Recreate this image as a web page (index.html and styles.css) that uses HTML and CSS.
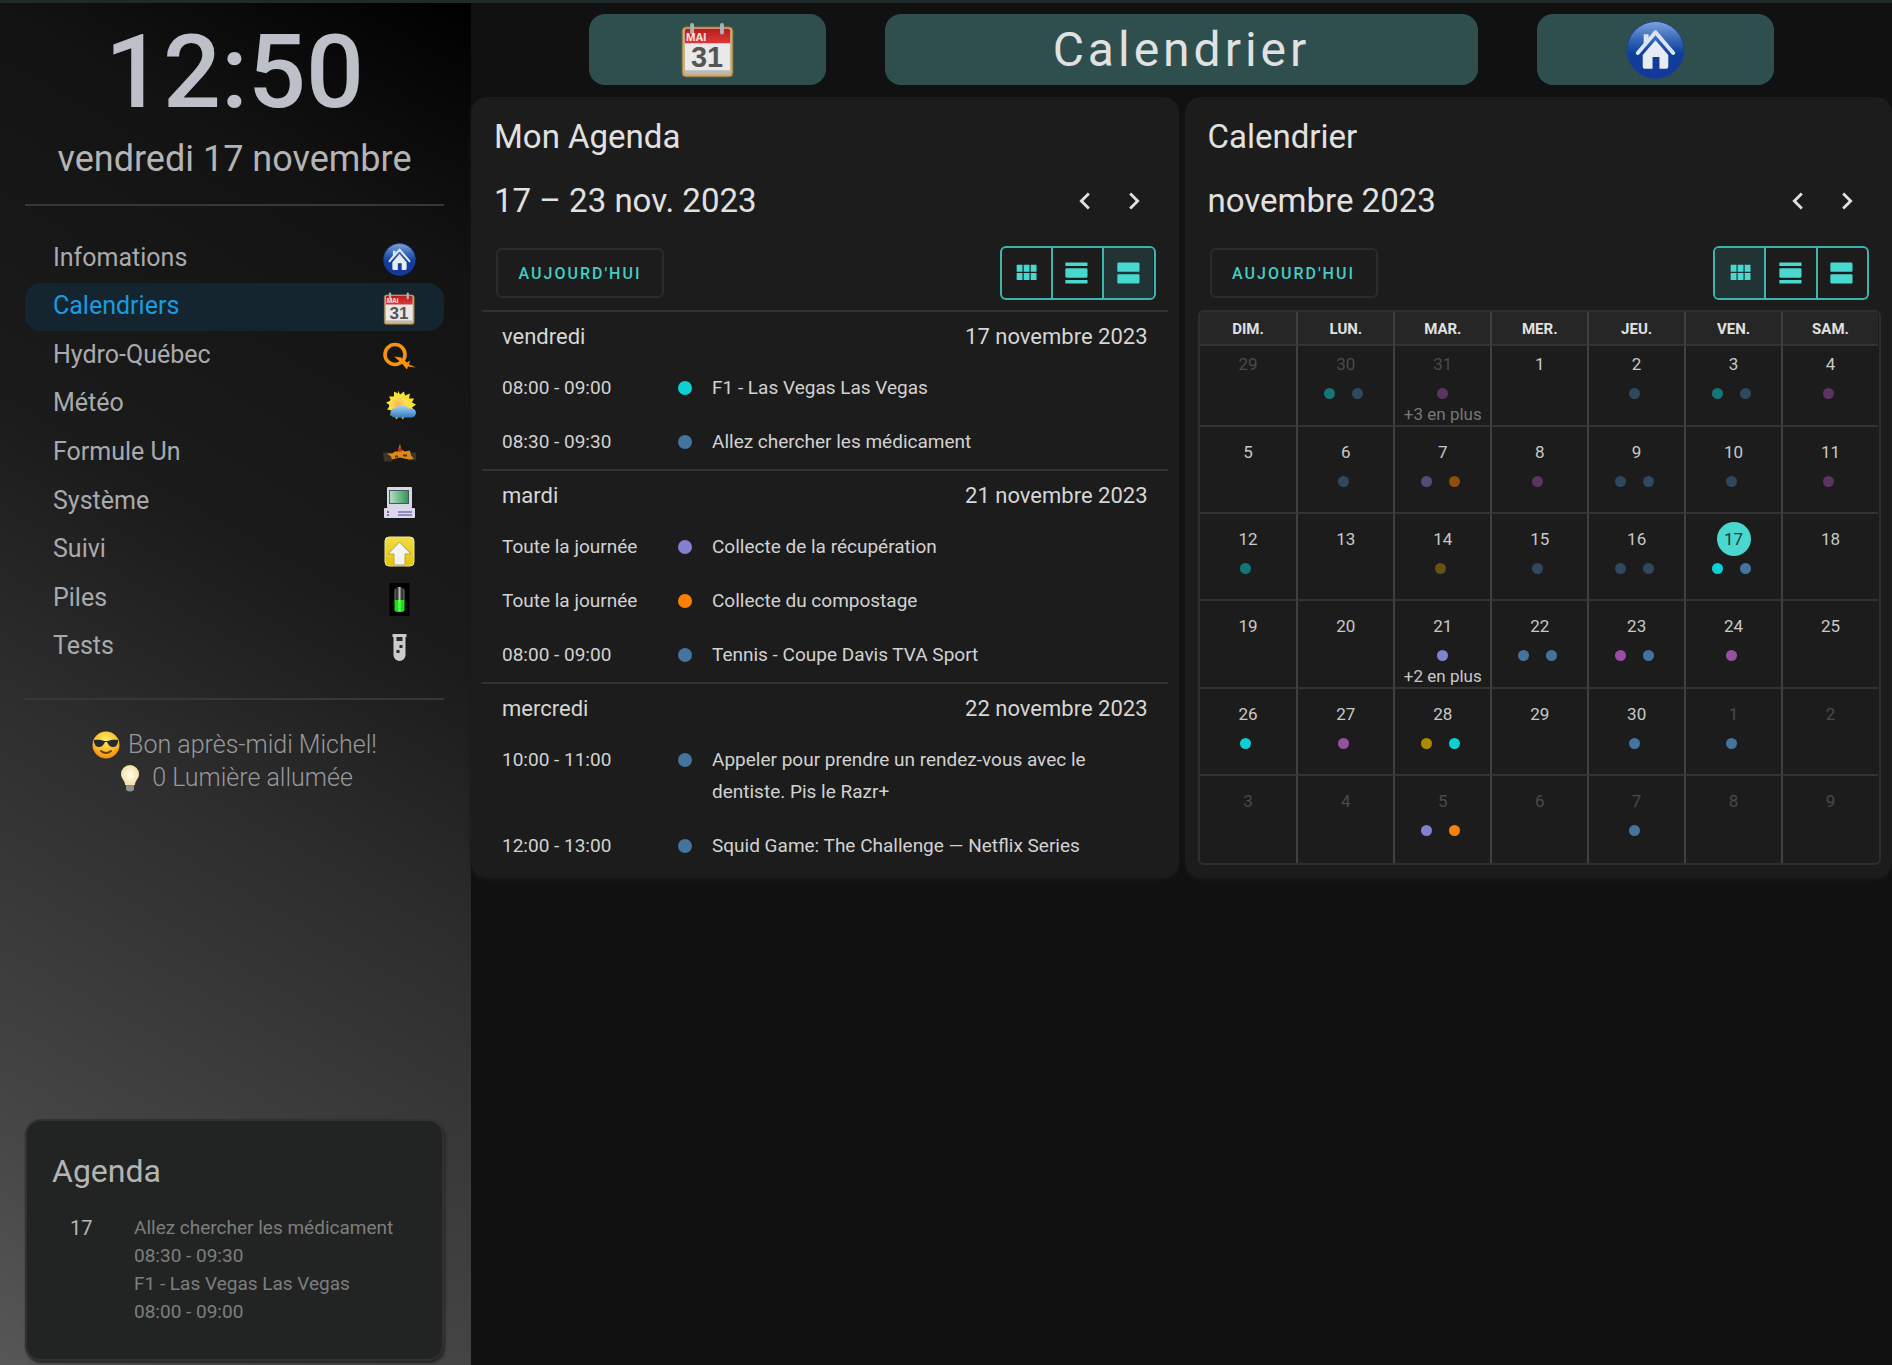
FILE: index.html
```html
<!DOCTYPE html>
<html lang="fr">
<head>
<meta charset="utf-8">
<title>Calendrier</title>
<meta name="viewport" content="width=device-width, initial-scale=1">
<link rel="stylesheet" href="styles.css">
</head>
<body>
<svg class="defs" aria-hidden="true">
  <defs>
    <linearGradient id="blue" x1="0" y1="0" x2="0" y2="1"><stop offset="0" stop-color="#7fa3dc"/><stop offset=".35" stop-color="#2f62b4"/><stop offset=".55" stop-color="#0f3f9b"/><stop offset="1" stop-color="#15379a"/></linearGradient>
    <linearGradient id="red" x1="0" y1="0" x2="0" y2="1"><stop offset="0" stop-color="#b81c1c"/><stop offset="1" stop-color="#dc3a3a"/></linearGradient>
    <radialGradient id="sun"><stop offset="0" stop-color="#f9b25a"/><stop offset="1" stop-color="#fbe84a"/></radialGradient>
    <linearGradient id="cloud" x1="0" y1="0" x2="0" y2="1"><stop offset="0" stop-color="#a9d0f0"/><stop offset="1" stop-color="#2f7fc4"/></linearGradient>
    <linearGradient id="screen" x1="0" y1="0" x2="1" y2="0"><stop offset="0" stop-color="#b5dcc0"/><stop offset="1" stop-color="#2f9a50"/></linearGradient>
    <linearGradient id="yellow" x1="0" y1="0" x2="0" y2="1"><stop offset="0" stop-color="#efdc4a"/><stop offset="1" stop-color="#e2c40c"/></linearGradient>
    <linearGradient id="metal" x1="0" y1="0" x2="1" y2="0"><stop offset="0" stop-color="#777"/><stop offset=".25" stop-color="#222"/><stop offset=".5" stop-color="#bbb"/><stop offset=".75" stop-color="#222"/><stop offset="1" stop-color="#777"/></linearGradient>
    <radialGradient id="face" cx=".5" cy=".3" r=".7"><stop offset="0" stop-color="#ffec6a"/><stop offset=".6" stop-color="#fbbd2a"/><stop offset="1" stop-color="#ef8a12"/></radialGradient>
    <radialGradient id="bulb" cx=".5" cy=".5" r=".55"><stop offset="0" stop-color="#fffdf0"/><stop offset="1" stop-color="#f3dc9c"/></radialGradient>

    <symbol id="i-home" viewBox="0 0 60 60">
      <circle cx="30" cy="30" r="29" fill="url(#blue)" stroke="#1b3f94" stroke-width="1"/>
      <path d="M18 25v-11h5v6" fill="#dbe4f2"/>
      <path d="M12 33 30 12 48 33" fill="none" stroke="#dbe4f2" stroke-width="4" stroke-linecap="round" stroke-linejoin="round"/>
      <path d="M30 20 43 35v12q0 2-2 2h-7v-12h-7v12h-8q-2 0-2-2v-12z" fill="#e6ebf4"/>
    </symbol>
    <symbol id="i-calendar" viewBox="0 0 56 58">
      <rect x="1" y="5" width="53" height="52" rx="4" fill="#c9ab6c" stroke="#6d5b36" stroke-width="1"/>
      <rect x="4" y="7" width="47" height="46" rx="2" fill="#e9e9ea"/>
      <path d="M4 22V9q0-2 2-2h43q2 0 2 2v13z" fill="url(#red)"/>
      <path d="M4 50h47v3H4z" fill="#b9b9b9"/>
      <path d="M11.500 3v8M42.500 3v8" stroke="#a9b4b6" stroke-width="4" stroke-linecap="round"/>
      <text x="5" y="20" class="cal-month">MAI</text>
      <text x="27" y="47" class="cal-day" text-anchor="middle">31</text>
    </symbol>
    <symbol id="i-hydro" viewBox="0 0 33 28">
      <circle cx="12" cy="12" r="10" fill="none" stroke="#f7940d" stroke-width="3.600"/>
      <path d="M11 14l7 1 6 5 3-2-1 4 7 3-8-1-1 3-6-7z" fill="#f7940d"/>
    </symbol>
    <symbol id="i-weather" viewBox="0 0 33 30">
      <path d="M15 0l2 4 4-3 1 4 5-2-1 5 5 0-2 4 4 2-4 3 3 4-5 0 0 5-5-2-2 5-3-4-4 4-1-5-5 1 2-5-5-1 3-4-4-3 5-2-2-4 5 0 0-5 4 2z" fill="#f6e232"/>
      <circle cx="15" cy="14" r="9" fill="url(#sun)"/>
      <path d="M11 27a5 5 0 0 1-3-7q2-3 5-2 2-4 7-3 4 0 5 3 7-1 8 4 0 4-4 5z" fill="url(#cloud)"/>
    </symbol>
    <symbol id="i-f1" viewBox="0 0 33 20">
      <path d="M0 9h9v9H1zM24 9h9v8h-8z" fill="#39342c"/>
      <path d="M9 10 12 8h3l1-4 1-4 1 6 4 2 5-1 1 5 3 3-4 1-6-1-4-1-8 2-1-3-4-3z" fill="#e08a14"/>
      <path d="M15 4h3l1 4h-4z" fill="#b8301a"/>
      <path d="M12 12h3v2h-3zM20 11h4v2h-4z" fill="#503718"/>
    </symbol>
    <symbol id="i-computer" viewBox="0 0 33 33">
      <rect x="4" y="1" width="25" height="21" rx="1" fill="#dad6ea"/>
      <rect x="6" y="4" width="20" height="14" fill="#4c5468"/>
      <rect x="7" y="5" width="18" height="12" fill="url(#screen)"/>
      <rect x="1" y="22" width="31" height="10" rx="1" fill="#dcd8ec"/>
      <path d="M15 25h14v2H15zM15 28h14v2H15z" fill="#8f8ab8"/>
      <path d="M4 25h2v2H4z" fill="#d04a5a"/><path d="M4 28h2v2H4z" fill="#4a8ad0"/>
    </symbol>
    <symbol id="i-up" viewBox="0 0 33 33">
      <rect x="2" y="2" width="29" height="29" rx="4" fill="url(#yellow)" stroke="#f3e68a" stroke-width="1"/>
      <path d="M16.500 7 28 19h-6v11H11V19H5z" fill="#f4f4f4" stroke="#b8a644" stroke-width="1"/>
    </symbol>
    <symbol id="i-battery" viewBox="0 0 20 33">
      <path d="M0 0h20v33H0z" fill="#000"/>
      <path d="M5 7q0-2 3-2v-1h4v1q3 0 3 2v11H5z" fill="url(#metal)"/>
      <path d="M5 17h10v10q0 2-5 2t-5-2z" fill="#13e213"/>
      <path d="M9 17h2v11H9z" fill="#8dff8d"/>
    </symbol>
    <symbol id="i-tube" viewBox="0 0 16 30">
      <path d="M1 1h14v3h-1v18a6 6 0 0 1-12 0V4H1z" fill="#cbcbcb"/>
      <path d="M5 4h6v4H5zM8 12h3v3H8zM5 17h3v3H5z" fill="#2a2a2a"/>
    </symbol>
    <symbol id="i-cool" viewBox="0 0 28 28">
      <circle cx="14" cy="14" r="13.500" fill="url(#face)"/>
      <path d="M2 9q6-1 10 1h4q4-2 10-1v2q-1 5-5 5t-6-5h-2q-2 5-6 5t-5-5z" fill="#252a2e"/>
      <path d="M9 20q5 4 10 0" fill="none" stroke="#6b3d10" stroke-width="2" stroke-linecap="round"/>
    </symbol>
    <symbol id="i-bulb" viewBox="0 0 28 28">
      <path d="M14 1a9 9 0 0 1 9 9c0 5-4 6-4 11H9C9 16 5 15 5 10a9 9 0 0 1 9-9z" fill="url(#bulb)"/>
      <path d="M10 21h8v5q-4 3-8 0z" fill="#8f918f"/>
    </symbol>
    <symbol id="i-prev" viewBox="0 0 24 24"><path d="M15.410 16.580 10.830 12l4.580-4.590L14 6l-6 6 6 6z"/></symbol>
    <symbol id="i-next" viewBox="0 0 24 24"><path d="M8.590 16.580 13.170 12 8.590 7.410 10 6l6 6-6 6z"/></symbol>
    <symbol id="i-month" viewBox="0 0 24 24"><path d="M16 5v6h5V5M10 11h5V5h-5M16 18h5v-6h-5M10 18h5v-6h-5M4 18h5v-6H4M4 11h5V5H4z"/></symbol>
    <symbol id="i-day" viewBox="0 0 24 24"><path d="M2 3v3h19V3M20 8H3a1 1 0 0 0-1 1v6a1 1 0 0 0 1 1h17a1 1 0 0 0 1-1V9a1 1 0 0 0-1-1M2 21h19v-3H2z"/></symbol>
    <symbol id="i-list" viewBox="0 0 24 24"><path d="M20 3H3a1 1 0 0 0-1 1v6a1 1 0 0 0 1 1h17a1 1 0 0 0 1-1V4a1 1 0 0 0-1-1M20 13H3a1 1 0 0 0-1 1v6a1 1 0 0 0 1 1h17a1 1 0 0 0 1-1v-6a1 1 0 0 0-1-1z"/></symbol>
  </defs>
</svg>

<aside class="sidebar">
  <time class="clock">12:50</time>
  <p class="today-date">vendredi 17 novembre</p>
  <hr class="rule">
  <nav class="menu">
    <a class="menu-item" href="#infos"><span class="menu-label">Infomations</span><svg class="menu-icon"><use href="#i-home"/></svg></a>
    <a class="menu-item active" href="#calendriers"><span class="menu-label">Calendriers</span><svg class="menu-icon"><use href="#i-calendar"/></svg></a>
    <a class="menu-item" href="#hydro"><span class="menu-label">Hydro-Québec</span><svg class="menu-icon"><use href="#i-hydro"/></svg></a>
    <a class="menu-item" href="#meteo"><span class="menu-label">Météo</span><svg class="menu-icon"><use href="#i-weather"/></svg></a>
    <a class="menu-item" href="#f1"><span class="menu-label">Formule Un</span><svg class="menu-icon"><use href="#i-f1"/></svg></a>
    <a class="menu-item" href="#systeme"><span class="menu-label">Système</span><svg class="menu-icon"><use href="#i-computer"/></svg></a>
    <a class="menu-item" href="#suivi"><span class="menu-label">Suivi</span><svg class="menu-icon"><use href="#i-up"/></svg></a>
    <a class="menu-item" href="#piles"><span class="menu-label">Piles</span><svg class="menu-icon"><use href="#i-battery"/></svg></a>
    <a class="menu-item" href="#tests"><span class="menu-label">Tests</span><svg class="menu-icon tube"><use href="#i-tube"/></svg></a>
  </nav>
  <hr class="rule">
  <div class="messages">
    <p class="message"><svg class="emoji"><use href="#i-cool"/></svg>Bon après-midi Michel!</p>
    <p class="message"><svg class="emoji"><use href="#i-bulb"/></svg>0 Lumière allumée</p>
  </div>
  <section class="mini-agenda">
    <h2 class="mini-title">Agenda</h2>
    <div class="mini-body">
      <span class="mini-day">17</span>
      <div class="mini-events">
        <p>Allez chercher les médicament</p>
        <p>08:30 - 09:30</p>
        <p>F1 - Las Vegas Las Vegas</p>
        <p>08:00 - 09:00</p>
      </div>
    </div>
  </section>
</aside>

<main class="main">
  <header class="topbar">
    <button class="tile tile-left" aria-label="Calendrier"><svg class="tile-cal"><use href="#i-calendar"/></svg></button>
    <h1 class="tile tile-title">Calendrier</h1>
    <button class="tile tile-right" aria-label="Accueil"><svg class="tile-home"><use href="#i-home"/></svg></button>
  </header>

  <div class="cards">
    <section class="card">
      <h2 class="card-title">Mon Agenda</h2>
      <div class="period">
        <h3 class="period-title">17 – 23 nov. 2023</h3>
        <div class="arrows">
          <button class="arrow" aria-label="Précédent"><svg><use href="#i-prev"/></svg></button>
          <button class="arrow" aria-label="Suivant"><svg><use href="#i-next"/></svg></button>
        </div>
      </div>
      <div class="tools">
        <button class="today-btn">AUJOURD'HUI</button>
        <div class="views">
          <button class="view" aria-label="Mois"><svg><use href="#i-month"/></svg></button>
          <button class="view" aria-label="Jour"><svg><use href="#i-day"/></svg></button>
          <button class="view selected" aria-label="Liste"><svg><use href="#i-list"/></svg></button>
        </div>
      </div>
      <div class="list">
        <div class="list-day"><span>vendredi</span><span>17 novembre 2023</span></div>
        <div class="event"><span>08:00 - 09:00</span><i class="bullet cyan"></i><span>F1 - Las Vegas Las Vegas</span></div>
        <div class="event"><span>08:30 - 09:30</span><i class="bullet blue"></i><span>Allez chercher les médicament</span></div>
        <div class="list-day"><span>mardi</span><span>21 novembre 2023</span></div>
        <div class="event"><span>Toute la journée</span><i class="bullet violet"></i><span>Collecte de la récupération</span></div>
        <div class="event"><span>Toute la journée</span><i class="bullet orange"></i><span>Collecte du compostage</span></div>
        <div class="event"><span>08:00 - 09:00</span><i class="bullet blue"></i><span>Tennis - Coupe Davis TVA Sport</span></div>
        <div class="list-day"><span>mercredi</span><span>22 novembre 2023</span></div>
        <div class="event"><span>10:00 - 11:00</span><i class="bullet blue"></i><span>Appeler pour prendre un rendez-vous avec le dentiste. Pis le Razr+</span></div>
        <div class="event"><span>12:00 - 13:00</span><i class="bullet blue"></i><span>Squid Game: The Challenge — Netflix Series</span></div>
      </div>
    </section>

    <section class="card">
      <h2 class="card-title">Calendrier</h2>
      <div class="period">
        <h3 class="period-title">novembre 2023</h3>
        <div class="arrows">
          <button class="arrow" aria-label="Précédent"><svg><use href="#i-prev"/></svg></button>
          <button class="arrow" aria-label="Suivant"><svg><use href="#i-next"/></svg></button>
        </div>
      </div>
      <div class="tools">
        <button class="today-btn">AUJOURD'HUI</button>
        <div class="views">
          <button class="view selected" aria-label="Mois"><svg><use href="#i-month"/></svg></button>
          <button class="view" aria-label="Jour"><svg><use href="#i-day"/></svg></button>
          <button class="view" aria-label="Liste"><svg><use href="#i-list"/></svg></button>
        </div>
      </div>
      <div class="month-frame">
      <table class="month">
        <thead><tr><th>DIM.</th><th>LUN.</th><th>MAR.</th><th>MER.</th><th>JEU.</th><th>VEN.</th><th>SAM.</th></tr></thead>
        <tbody>
          <tr>
            <td class="other"><b>29</b></td>
            <td class="other past"><b>30</b><div class="dots"><i class="cyan"></i><i class="blue"></i></div></td>
            <td class="other past"><b>31</b><div class="dots single"><i class="magenta"></i></div><span class="more">+3 en plus</span></td>
            <td><b>1</b></td>
            <td class="past"><b>2</b><div class="dots"><i class="blue"></i></div></td>
            <td class="past"><b>3</b><div class="dots"><i class="cyan"></i><i class="blue"></i></div></td>
            <td class="past"><b>4</b><div class="dots"><i class="magenta"></i></div></td>
          </tr>
          <tr>
            <td><b>5</b></td>
            <td class="past"><b>6</b><div class="dots"><i class="blue"></i></div></td>
            <td class="past"><b>7</b><div class="dots"><i class="violet"></i><i class="orange"></i></div></td>
            <td class="past"><b>8</b><div class="dots"><i class="magenta"></i></div></td>
            <td class="past"><b>9</b><div class="dots"><i class="blue"></i><i class="blue"></i></div></td>
            <td class="past"><b>10</b><div class="dots"><i class="blue"></i></div></td>
            <td class="past"><b>11</b><div class="dots"><i class="magenta"></i></div></td>
          </tr>
          <tr>
            <td class="past"><b>12</b><div class="dots"><i class="cyan"></i></div></td>
            <td><b>13</b></td>
            <td class="past"><b>14</b><div class="dots"><i class="gold"></i></div></td>
            <td class="past"><b>15</b><div class="dots"><i class="blue"></i></div></td>
            <td class="past"><b>16</b><div class="dots"><i class="blue"></i><i class="blue"></i></div></td>
            <td><b class="now">17</b><div class="dots"><i class="cyan"></i><i class="blue"></i></div></td>
            <td><b>18</b></td>
          </tr>
          <tr>
            <td><b>19</b></td>
            <td><b>20</b></td>
            <td><b>21</b><div class="dots single"><i class="violet"></i></div><span class="more">+2 en plus</span></td>
            <td><b>22</b><div class="dots"><i class="blue"></i><i class="blue"></i></div></td>
            <td><b>23</b><div class="dots"><i class="magenta"></i><i class="blue"></i></div></td>
            <td><b>24</b><div class="dots"><i class="magenta"></i></div></td>
            <td><b>25</b></td>
          </tr>
          <tr>
            <td><b>26</b><div class="dots"><i class="cyan"></i></div></td>
            <td><b>27</b><div class="dots"><i class="magenta"></i></div></td>
            <td><b>28</b><div class="dots"><i class="gold"></i><i class="cyan"></i></div></td>
            <td><b>29</b></td>
            <td><b>30</b><div class="dots"><i class="blue"></i></div></td>
            <td class="other"><b>1</b><div class="dots"><i class="blue"></i></div></td>
            <td class="other"><b>2</b></td>
          </tr>
          <tr>
            <td class="other"><b>3</b></td>
            <td class="other"><b>4</b></td>
            <td class="other"><b>5</b><div class="dots"><i class="violet"></i><i class="orange"></i></div></td>
            <td class="other"><b>6</b></td>
            <td class="other"><b>7</b><div class="dots"><i class="blue"></i></div></td>
            <td class="other"><b>8</b></td>
            <td class="other"><b>9</b></td>
          </tr>
        </tbody>
      </table>
      </div>
    </section>
  </div>
</main>
</body>
</html>
```
FILE: styles.css
```css
* { box-sizing: border-box; }

body {
  margin: 0;
  min-height: 100vh;
  display: flex;
  border-top: 3px solid #1f2a2b;
  background: #111;
  color: #e1e1e1;
  font-family: Roboto, "Liberation Sans", sans-serif;
}

h1, h2, h3, p { margin: 0; font-weight: 400; }
button { padding: 0; font-family: inherit; color: inherit; background: none; border: 0; cursor: pointer; }
.defs { position: absolute; width: 0; height: 0; }
.cal-month { font: 700 11px "Open Sans", sans-serif; fill: #fbe3e3; }
.cal-day { font: 700 30px "Liberation Sans", sans-serif; fill: #555; }

.cyan { background: #0cd0d4; }
.blue { background: #44739e; }
.violet { background: #8280cf; }
.orange { background: #ff8000; }
.magenta { background: #984ea3; }
.gold { background: #ac8b04; }

/* Sidebar */
.sidebar {
  flex: 0 0 471px;
  display: flex;
  flex-direction: column;
  padding: 17px 27px 4px 25px;
  background: linear-gradient(210deg, #000 0%, #131313 17%, #1b1b1b 41%, #2d2d2d 58%, #353535 67%, #444 83%, #575757 100%);
}
.clock { font-size: 102px; line-height: 104px; font-weight: 500; text-align: center; color: #bdc0c8; }
.today-date { margin-top: 11px; font-size: 36px; line-height: 48px; text-align: center; color: #b4b4b4; }
.rule { width: 100%; height: 2px; margin: 21px 0 0; border: 0; background: #373737; }
.menu { display: grid; grid-auto-rows: 1fr; min-height: 437px; margin: 28px 0 6px; }
.menu-item {
  display: flex;
  align-items: center;
  justify-content: space-between;
  padding: 0 28px;
  border-radius: 16px;
  color: #a8aaae;
  font-size: 25px;
  line-height: 30px;
  text-decoration: none;
}
.menu-item.active { background: #14252f; color: #1a9be0; }
.menu-label { padding-bottom: 1px; }
.menu-icon { width: 33px; height: 33px; margin-top: 3px; }
.menu-icon.tube { height: 30px; }
.messages { margin-top: 28px; }
.message { display: flex; justify-content: center; align-items: center; gap: 8px; font-size: 25px; line-height: 33px; font-weight: 300; color: #97989c; }
.emoji { width: 28px; height: 28px; }

.mini-agenda {
  margin-top: auto;
  padding: 30px 25px 33px;
  border: 2px solid #31322f;
  border-radius: 16px;
  background: #222423;
  box-shadow: 1px 2px 3px #222;
}
.mini-title { font-size: 32px; line-height: 40px; color: #b3b4b4; }
.mini-body { display: grid; grid-template-columns: 64px 1fr; column-gap: 18px; margin-top: 23px; font-size: 19px; line-height: 28px; color: #7d7e7e; }
.mini-day { padding-left: 18px; color: #b8b8b8; font-size: 20px; }
.mini-events { white-space: nowrap; }

/* Top bar */
.main { flex: 1; min-width: 0; }
.topbar { display: grid; grid-template-columns: 2fr 4fr 1fr 10fr 1fr 4fr 2fr; padding: 11px 0 12px; }
.tile {
  display: flex;
  align-items: center;
  justify-content: center;
  height: 71px;
  border-radius: 16px;
  background: #2f4f4f;
}
.tile-left { grid-column: 2; }
.tile-title { grid-column: 4; font-size: 48px; line-height: 64px; letter-spacing: 4px; color: #e1e1e1; }
.tile-right { grid-column: 6; }
.tile-cal { width: 54px; height: 58px; }
.tile-home { width: 59px; height: 60px; }

/* Cards */
.cards { display: grid; grid-template-columns: 1fr 1fr; gap: 6px; }
.card { padding: 16px 11px 5px; border-radius: 16px; background: #1c1c1c; box-shadow: 0 2px 4px #181818; }
.card-title { padding-left: 12px; font-size: 33px; line-height: 48px; }
.period { display: flex; justify-content: space-between; align-items: center; margin-top: 16px; padding: 0 17px 0 12px; }
.period-title { font-size: 33px; line-height: 48px; }
.arrows { display: flex; gap: 15px; }
.arrow { width: 34px; height: 34px; }
.arrow svg { display: block; width: 34px; height: 34px; fill: #e1e1e1; }
.tools { display: flex; justify-content: space-between; align-items: center; margin: 21px 0 10px; padding: 0 12px 0 14px; }
.today-btn {
  width: 168px;
  height: 50px;
  border: 2px solid #2b2b2b;
  border-radius: 6px;
  color: #45cdc4;
  font-size: 16px;
  font-weight: 500;
  letter-spacing: 2px;
}
.views { display: flex; width: 156px; height: 54px; border: 2px solid #3db5ae; border-radius: 6px; overflow: hidden; }
.view { flex: 1; display: flex; align-items: center; justify-content: center; }
.view + .view { border-left: 2px solid #3db5ae; }
.view.selected { background: #213332; }
.view svg { width: 28px; height: 28px; fill: #48d8d0; }

/* Agenda list */
.list-day { display: flex; justify-content: space-between; padding: 9px 20px 8px; border-top: 2px solid #323232; font-size: 22px; line-height: 32px; color: #d6d6d6; }
.event { display: grid; grid-template-columns: 176px 14px 1fr; padding: 11px 20px; font-size: 19px; line-height: 32px; color: #d2d2d2; }
/* the wide left padding keeps titles clear of the bullet */
.event span:last-child { padding: 0 20px; }
.bullet { width: 14px; height: 14px; margin-top: 9px; border-radius: 50%; }

/* Month grid */
.month-frame { margin: 0 0 0 2px; padding-right: 1px; border: 2px solid #2e2e2e; border-radius: 6px; overflow: hidden; }
.month { width: 100%; height: 551px; table-layout: fixed; border-collapse: separate; border-spacing: 0; }
.month th { height: 34px; padding: 2px 0 0; background: #262626; font-size: 15px; line-height: 20px; font-weight: 700; color: #e1e1e1; border-bottom: 2px solid #333; }
.month td { height: 87px; padding: 8px 0 0; vertical-align: top; text-align: center; border-bottom: 2px solid #333; font-size: 17px; color: #c9c9c9; }
.month tr:first-child td { height: 81px; padding-top: 1px; }
.month tr:last-child td { border-bottom: 0; }
.month th + th, .month td + td { border-left: 2px solid #404040; }
.month b { display: block; width: 34px; height: 34px; margin: 0 auto; border-radius: 50%; line-height: 34px; font-weight: 400; }
.month b.now { background: #48d8d0; color: #1c3937; }
.month .other b { color: #4a4a4a; }
.dots { display: flex; justify-content: center; gap: 17px; padding: 7px 5px 0 0; }
.dots.single { padding-right: 0; }
.dots i { width: 11px; height: 11px; border-radius: 50%; }
.past .dots i { opacity: 0.5; }
.more { display: block; margin-top: 5px; line-height: 20px; }
.past .more { color: #777; }
```
